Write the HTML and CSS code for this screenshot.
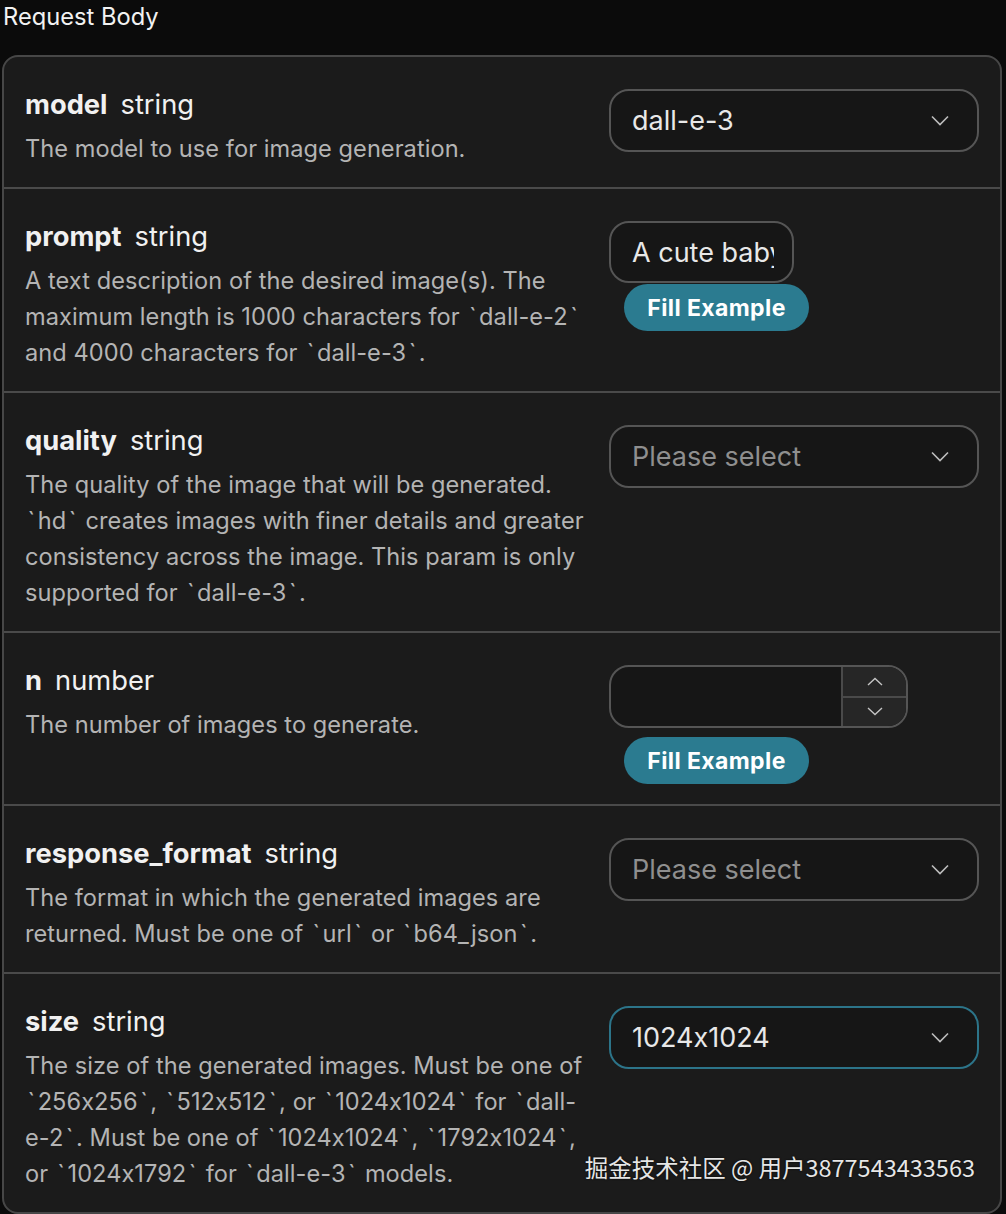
FILE: index.html
```html
<!DOCTYPE html>
<html lang="en">
<head>
<meta charset="utf-8">
<title>Request Body</title>
<link rel="stylesheet" href="styles.css">
</head>
<body>
<div class="page">
  <div class="heading">Request Body</div>
  <div class="card">
    <div class="row">
      <div class="info">
        <div class="title"><span class="name">model</span><span class="type">string</span></div>
        <div class="desc">The model to use for image generation.</div>
      </div>
      <div class="control">
        <div class="select"><span class="value">dall-e-3</span>
          <svg class="chev" viewBox="0 0 18 11" width="18" height="11"><path d="M1 1.5 L9 9.5 L17 1.5" fill="none" stroke="#bdbdbd" stroke-width="1.6"/></svg>
        </div>
      </div>
    </div>

    <div class="row">
      <div class="info">
        <div class="title"><span class="name">prompt</span><span class="type">string</span></div>
        <div class="desc">A text description of the desired image(s). The maximum length is 1000 characters for <span class="tk">`</span>dall-e-2<span class="tk">`</span> and 4000 characters for <span class="tk">`</span>dall-e-3<span class="tk">`</span>.</div>
      </div>
      <div class="control">
        <div class="text-input"><span class="value clip">A cute baby sea otter</span></div>
        <button class="fill">Fill Example</button>
      </div>
    </div>

    <div class="row">
      <div class="info">
        <div class="title"><span class="name">quality</span><span class="type">string</span></div>
        <div class="desc">The quality of the image that will be generated. <span class="tk">`</span>hd<span class="tk">`</span> creates images with finer details and greater consistency across the image. This param is only supported for <span class="tk">`</span>dall-e-3<span class="tk">`</span>.</div>
      </div>
      <div class="control">
        <div class="select"><span class="placeholder">Please select</span>
          <svg class="chev" viewBox="0 0 18 11" width="18" height="11"><path d="M1 1.5 L9 9.5 L17 1.5" fill="none" stroke="#bdbdbd" stroke-width="1.6"/></svg>
        </div>
      </div>
    </div>

    <div class="row">
      <div class="info">
        <div class="title"><span class="name">n</span><span class="type">number</span></div>
        <div class="desc">The number of images to generate.</div>
      </div>
      <div class="control">
        <div class="number">
          <div class="num-field"></div>
          <div class="spin">
            <div class="spin-btn"><svg viewBox="0 0 16 9" width="16" height="9"><path d="M1 8 L8 1.5 L15 8" fill="none" stroke="#c4c4c4" stroke-width="1.4"/></svg></div>
            <div class="spin-btn"><svg viewBox="0 0 16 9" width="16" height="9"><path d="M1 1 L8 7.5 L15 1" fill="none" stroke="#c4c4c4" stroke-width="1.4"/></svg></div>
          </div>
        </div>
        <button class="fill">Fill Example</button>
      </div>
    </div>

    <div class="row">
      <div class="info">
        <div class="title"><span class="name">response_format</span><span class="type">string</span></div>
        <div class="desc">The format in which the generated images are returned. Must be one of <span class="tk">`</span>url<span class="tk">`</span> or <span class="tk">`</span>b64_json<span class="tk">`</span>.</div>
      </div>
      <div class="control">
        <div class="select"><span class="placeholder">Please select</span>
          <svg class="chev" viewBox="0 0 18 11" width="18" height="11"><path d="M1 1.5 L9 9.5 L17 1.5" fill="none" stroke="#bdbdbd" stroke-width="1.6"/></svg>
        </div>
      </div>
    </div>

    <div class="row">
      <div class="info">
        <div class="title"><span class="name">size</span><span class="type">string</span></div>
        <div class="desc">The size of the generated images. Must be one of <span class="tk">`</span>256x256<span class="tk">`</span>, <span class="tk">`</span>512x512<span class="tk">`</span>, or <span class="tk">`</span>1024x1024<span class="tk">`</span> for <span class="tk">`</span>dall-e-2<span class="tk">`</span>. Must be one of <span class="tk">`</span>1024x1024<span class="tk">`</span>, <span class="tk">`</span>1792x1024<span class="tk">`</span>, or <span class="tk">`</span>1024x1792<span class="tk">`</span> for <span class="tk">`</span>dall-e-3<span class="tk">`</span> models.</div>
      </div>
      <div class="control">
        <div class="select focused"><span class="value">1024x1024</span>
          <svg class="chev" viewBox="0 0 18 11" width="18" height="11"><path d="M1 1.5 L9 9.5 L17 1.5" fill="none" stroke="#bdbdbd" stroke-width="1.6"/></svg>
        </div>
      </div>
    </div>
  </div>
  <div class="watermark">掘金技术社区 @ 用户3877543433563</div>
</div>
</body>
</html>
```

FILE: styles.css
```css
html, body {
  margin: 0;
  padding: 0;
  background: #0b0b0b;
}
body {
  font-family: Inter, "Noto Sans", sans-serif;
  font-feature-settings: "calt" 0;
  color: #ededed;
}
.page {
  position: relative;
  width: 1006px;
  height: 1214px;
  overflow: hidden;
}
.heading {
  font-size: 23.7px;
  line-height: 32px;
  padding: 1px 0 0 3px;
  height: 54px;
  color: #f2f2f2;
}
.card {
  margin-left: 2px;
  width: 996px;
  border: 2px solid #474747;
  border-radius: 16px;
  background: #1b1b1b;
  overflow: hidden;
}
.row {
  display: flex;
  gap: 18px;
  padding: 30px 21px 20px 21px;
  border-top: 2px solid #4a4a4a;
}
.row:first-child {
  border-top: none;
}
.info {
  flex: 1;
  min-width: 0;
}
.title {
  font-size: 27.3px;
  line-height: 36px;
  margin-bottom: 8px;
  color: #f1f1f1;
}
.name {
  font-weight: 700;
  margin-right: 13px;
}
.desc {
  font-size: 23.6px;
  letter-spacing: 0.05px;
  line-height: 36px;
  color: #b4b4b4;
}
.tk {
  margin: 0 2.5px;
}
.control {
  width: 370px;
  flex: none;
  display: flex;
  flex-direction: column;
  align-items: flex-start;
  padding-top: 2px;
}
.select, .text-input {
  box-sizing: border-box;
  height: 63px;
  border: 2px solid #555;
  border-radius: 20px;
  background: #161616;
  display: flex;
  align-items: center;
  padding: 0 28px 0 21px;
  font-size: 27px;
}
.select {
  width: 370px;
  justify-content: space-between;
}
.select.focused {
  border-color: #2c7489;
}
.value {
  color: #e8e8e8;
}
.placeholder {
  color: #8f8f8f;
}
.text-input {
  width: 185px;
  height: 62px;
  padding-right: 0;
  overflow: hidden;
  white-space: nowrap;
}
.clip {
  display: block;
  width: 142px;
  overflow: hidden;
}
.chev {
  display: block;
}
.fill {
  margin: 1px 0 0 15px;
  width: 185px;
  height: 47px;
  border: none;
  border-radius: 24px;
  background: #2b7b90;
  color: #ffffff;
  font-family: Inter, "Noto Sans", sans-serif;
  font-weight: 700;
  font-size: 23px;
  letter-spacing: 0.4px;
  padding: 0;
}
.number {
  box-sizing: border-box;
  width: 299px;
  height: 63px;
  border: 2px solid #555;
  border-radius: 20px;
  background: #161616;
  display: flex;
  overflow: hidden;
  margin-bottom: 8px;
}
.num-field {
  flex: 1;
}
.spin {
  width: 63px;
  border-left: 2px solid #4a4a4a;
  display: flex;
  flex-direction: column;
  background: #262626;
}
.spin-btn {
  flex: 1;
  display: flex;
  align-items: center;
  justify-content: center;
}
.spin-btn + .spin-btn {
  border-top: 2px solid #4a4a4a;
}
.watermark {
  position: absolute;
  right: 31px;
  bottom: 30px;
  font-family: "Noto Sans CJK SC", "Noto Sans", sans-serif;
  font-size: 23.5px;
  color: #e6e6e6;
  text-shadow: 0 0 2px #000;
}
```
